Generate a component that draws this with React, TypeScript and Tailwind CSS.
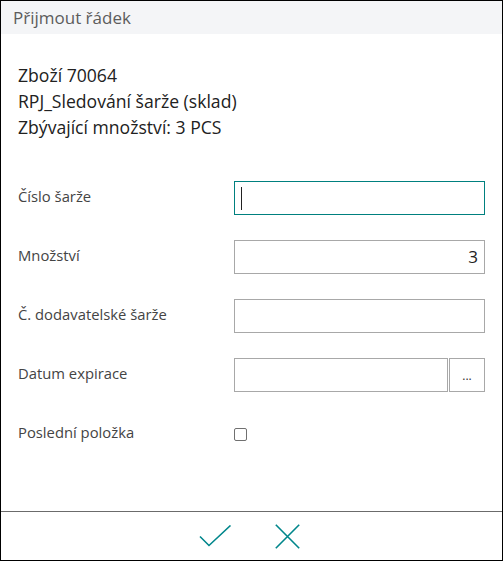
import React from "react";

const font = { fontFamily: '"Open Sans", "Noto Sans", sans-serif' };

const Field = ({ label, children }: { label: string; children: React.ReactNode }) => (
  <div className="grid grid-cols-[216px_1fr] items-center h-[34px]">
    <span className="text-[14.8px] text-[#444444] pb-[3px]">{label}</span>
    {children}
  </div>
);

const Box = ({
  children,
  className = "",
  focused = false,
}: {
  children?: React.ReactNode;
  className?: string;
  focused?: boolean;
}) => (
  <div
    className={`h-[34px] border ${focused ? "border-[#00807f]" : "border-[#a8a8a8]"} bg-white flex items-center px-[6px] ${className}`}
  >
    {children}
  </div>
);

export default function App() {
  return (
    <div style={font} className="w-[503px] h-[561px] border border-black bg-white flex flex-col">
      <div className="h-[33px] bg-[#f4f5f7] flex items-center px-[12px] text-[17px] text-[#5c5c5c]">
        Přijmout řádek
      </div>

      <div className="flex-1 px-[17px] pt-[28px]">
        <div className="text-[17.6px] leading-[26px] text-[#212121]">
          <div>Zboží 70064</div>
          <div>RPJ_Sledování šarže (sklad)</div>
          <div>Zbývající množství: 3 PCS</div>
        </div>

        <div className="mt-[41px] flex flex-col gap-[25px]">
          <Field label="Číslo šarže">
            <Box focused>
              <span className="w-px h-[23px] bg-[#222222]" />
            </Box>
          </Field>
          <Field label="Množství">
            <Box className="justify-end text-[17px] text-[#212121]">3</Box>
          </Field>
          <Field label="Č. dodavatelské šarže">
            <Box />
          </Field>
          <Field label="Datum expirace">
            <div className="flex gap-px">
              <Box className="flex-1" />
              <div className="w-[36px] h-[34px] border border-[#a8a8a8] flex items-end justify-center pb-[9px] text-[12px] leading-none text-[#333333]">
                ...
              </div>
            </div>
          </Field>
          <Field label="Poslední položka">
            <div className="w-[13px] h-[13px] border border-[#707070] rounded-[2px] bg-white" />
          </Field>
        </div>
      </div>

      <div className="h-[49px] border-t border-[#6b6b6b] flex items-center justify-center gap-[43px] pr-[4px]">
        <svg width="33" height="23" viewBox="0 0 33 23" fill="none">
          <path d="M1 11.5 L10 20.5 L31.5 0.5" stroke="#00868b" strokeWidth="1.6" />
        </svg>
        <svg width="25" height="25" viewBox="0 0 25 25" fill="none">
          <path d="M0.8 0.8 L24.2 24.2 M24.2 0.8 L0.8 24.2" stroke="#00868b" strokeWidth="1.6" />
        </svg>
      </div>
    </div>
  );
}
